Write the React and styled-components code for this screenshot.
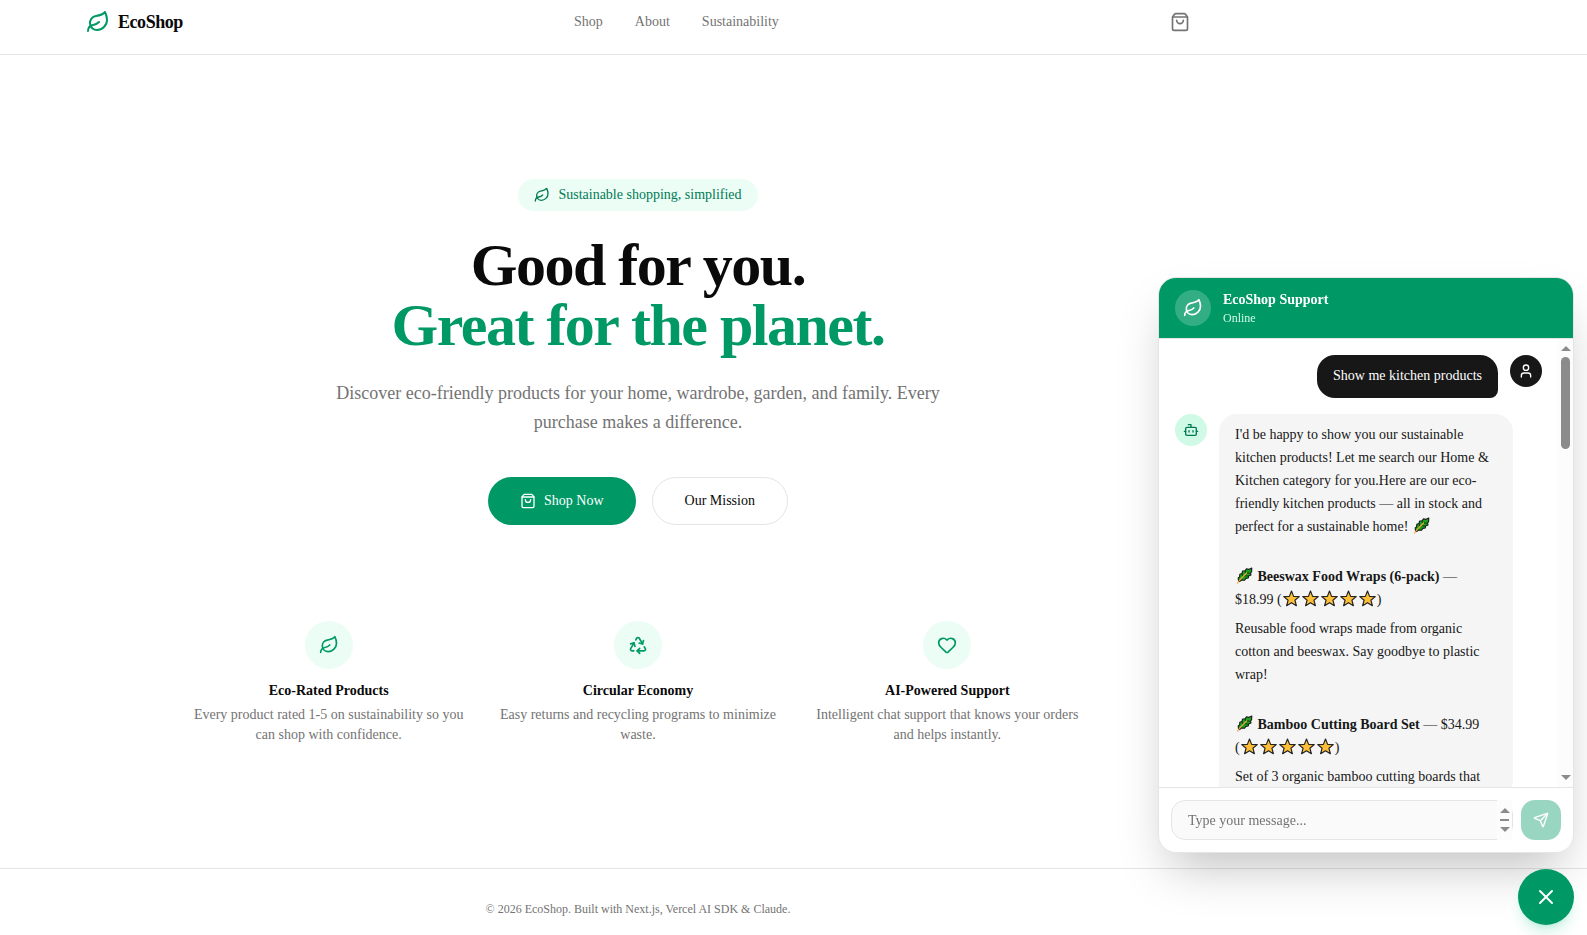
import React from "react";
import styled, { createGlobalStyle } from "styled-components";
import { Leaf, ShoppingBag, Recycle, Heart, User, Bot, Send, X } from "lucide-react";

const c = {
  green: "#009966",
  greenDark: "#007a55",
  green50: "#ecfdf5",
  green100: "#d0fae5",
  ink: "#0a0a0a",
  muted: "#737373",
  line: "#e5e5e5",
  dark: "#171717",
  soft: "#f5f5f5",
};

const Global = createGlobalStyle`
  *, *::before, *::after { box-sizing: border-box; }
  body, h1, h2, h3, p { margin: 0; }
  body {
    background: #fff;
    color: ${c.ink};
    font-family: "Liberation Serif", "Times New Roman", serif;
    font-size: 14px;
    line-height: 20px;
  }
  button, textarea { font: inherit; }
  button { cursor: pointer; border: 0; padding: 0; }
  a { color: inherit; text-decoration: none; }
  svg { display: block; flex-shrink: 0; }
`;

const Page = styled.div`
  min-height: 100vh;
  display: flex;
  flex-direction: column;
`;

const Header = styled.header`
  padding: 0 311px 10px 0;
  border-bottom: 1px solid ${c.line};
`;

const HeaderRow = styled.div`
  max-width: 1152px;
  height: 44px;
  margin: 0 auto;
  padding: 0 24px;
  display: flex;
  align-items: center;
  justify-content: space-between;
`;

const Logo = styled.a`
  display: flex;
  align-items: center;
  gap: 8px;
  font-size: 18px;
  line-height: 28px;
  font-weight: 700;
  letter-spacing: -0.025em;
  svg { color: ${c.green}; }
`;

const Nav = styled.nav`
  display: flex;
  gap: 32px;
  color: ${c.muted};
`;

const CartButton = styled.button`
  background: none;
  color: ${c.muted};
`;

const Main = styled.main`
  flex: 1;
  padding-right: 311px;
  display: flex;
  flex-direction: column;
  align-items: center;
  justify-content: center;
  text-align: center;
`;

const Badge = styled.div`
  display: flex;
  align-items: center;
  gap: 8px;
  padding: 6px 16px;
  border-radius: 16px;
  background: ${c.green50};
  color: ${c.greenDark};
`;

const Title = styled.h1`
  margin-top: 24px;
  font-size: 60px;
  line-height: 60px;
  font-weight: 700;
  letter-spacing: -0.025em;
  span { display: block; color: ${c.green}; }
`;

const Lead = styled.p`
  max-width: 640px;
  margin-top: 24px;
  font-size: 18px;
  line-height: 29px;
  color: ${c.muted};
`;

const Actions = styled.div`
  display: flex;
  gap: 16px;
  margin-top: 40px;
`;

const ActionButton = styled.button`
  display: flex;
  align-items: center;
  gap: 8px;
  height: 48px;
  padding: 0 32px;
  border-radius: 24px;
  border: ${(p) => (p.$primary ? "0" : `1px solid ${c.line}`)};
  background: ${(p) => (p.$primary ? c.green : "#fff")};
  color: ${(p) => (p.$primary ? "#fff" : c.ink)};
`;

const Features = styled.div`
  width: 100%;
  max-width: 896px;
  margin-top: 96px;
  display: grid;
  grid-template-columns: repeat(3, 1fr);
  gap: 32px;
`;

const Feature = styled.article`
  display: flex;
  flex-direction: column;
  align-items: center;
  h2 { margin-top: 12px; font-size: 14px; line-height: 20px; }
  p { margin-top: 4px; color: ${c.muted}; }
`;

const Round = styled.span`
  display: grid;
  place-items: center;
  flex-shrink: 0;
  width: ${(p) => p.$size}px;
  height: ${(p) => p.$size}px;
  border-radius: 50%;
  background: ${(p) => p.$bg};
  color: ${(p) => p.$fg};
`;

const Footer = styled.footer`
  padding: 32px 311px 18px 0;
  border-top: 1px solid ${c.line};
  text-align: center;
  font-size: 12px;
  line-height: 16px;
  color: ${c.muted};
`;

const Widget = styled.div`
  position: fixed;
  right: 13px;
  bottom: 10px;
  display: flex;
  flex-direction: column;
  align-items: flex-end;
  gap: 16px;
`;

const Panel = styled.section`
  width: 416px;
  height: 576px;
  max-width: calc(100vw - 26px);
  max-height: calc(100vh - 92px);
  display: flex;
  flex-direction: column;
  overflow: hidden;
  border: 1px solid ${c.line};
  border-radius: 18px;
  background: #fff;
  box-shadow: 0 25px 50px -12px rgba(0, 0, 0, 0.25);
`;

const PanelHeader = styled.header`
  display: flex;
  align-items: center;
  gap: 12px;
  padding: 12px 16px;
  border-bottom: 1px solid ${c.line};
  background: ${c.green};
  background-clip: padding-box;
  color: #fff;
  h2 { font-size: 14px; line-height: 20px; }
  p { font-size: 12px; line-height: 16px; color: ${c.green100}; }
`;

const Scroller = styled.div`
  flex: 1;
  min-height: 0;
  display: flex;
`;

const Messages = styled.div`
  flex: 1;
  overflow: hidden;
  padding: 16px;
  display: flex;
  flex-direction: column;
  gap: 16px;
`;

const Message = styled.div`
  display: flex;
  flex-shrink: 0;
  flex-direction: ${(p) => (p.$mine ? "row-reverse" : "row")};
  align-items: flex-start;
  gap: 12px;
`;

const Bubble = styled.div`
  max-width: 80%;
  padding: 9px 16px 11px;
  border-radius: 18px;
  border-bottom-${(p) => (p.$mine ? "right" : "left")}-radius: 8px;
  line-height: 23px;
  background: ${(p) => (p.$mine ? c.dark : c.soft)};
  color: ${(p) => (p.$mine ? "#fff" : c.dark)};
`;

const Product = styled.div`
  margin-top: 27px;
  p + p { margin-top: 6px; }
`;

const Emoji = styled.svg`
  && { display: inline-block; }
  width: 17px;
  height: 17px;
  margin: 0 1px;
  vertical-align: -3px;
`;

const Stars = styled.span`
  white-space: nowrap;
`;

const Track = styled.div`
  display: flex;
  flex-direction: column;
  align-items: center;
  flex-shrink: 0;
  width: 15px;
  padding: ${(p) => (p.$small ? "8px 0" : "7px 0")};
  margin: ${(p) => (p.$small ? "-1px 0" : "0")};
  background: #fcfcfc;
  justify-content: space-between;
`;

const Thumb = styled.span`
  width: 9px;
  height: 92px;
  margin: 6px 0 auto;
  border-radius: 5px;
  background: #8b8b8b;
`;

const Dash = styled.span`
  width: 9px;
  height: 2px;
  background: #8b8b8b;
`;

const Arrow = styled.span`
  border: solid transparent;
  border-width: 0 5px;
  border-${(p) => (p.$down ? "top" : "bottom")}: 5px solid #8b8b8b;
`;

const Composer = styled.form`
  display: flex;
  gap: 8px;
  padding: 12px;
  border-top: 1px solid ${c.line};
`;

const Field = styled.div`
  flex: 1;
  height: 40px;
  display: flex;
  border: 1px solid ${c.line};
  border-radius: 14px;
  background: #fafafa;
`;

const TextBox = styled.textarea`
  flex: 1;
  min-width: 0;
  padding: 10px 0 8px 16px;
  border: 0;
  outline: 0;
  resize: none;
  overflow: hidden;
  background: transparent;
  color: ${c.ink};
  &::placeholder { color: ${c.muted}; opacity: 1; }
`;

const SendButton = styled.button`
  display: grid;
  place-items: center;
  width: 40px;
  height: 40px;
  border-radius: 14px;
  background: ${c.green};
  color: #fff;
  opacity: 0.4;
`;

const CloseButton = styled.button`
  display: grid;
  place-items: center;
  width: 56px;
  height: 56px;
  border-radius: 50%;
  background: ${c.green};
  color: #fff;
  box-shadow: 0 10px 15px -3px rgba(0, 188, 125, 0.2), 0 4px 6px -4px rgba(0, 188, 125, 0.2);
`;

const Herb = () => (
  <Emoji viewBox="0 0 17 17" role="img" aria-label="herb">
    <path
      d="M2.5 13.8 2.2 11 3.6 9.8 3.8 7.2 6 6.4 6.6 4 9 3.8 10.500 1.8 12.500 2.4 15.8 1 15.6 4.6 14.6 6 15 8 12.6 9 12.3 11 9.8 11.4 8.6 13.2 5.6 13 3.6 14.6Z"
      fill="#17a31a"
      stroke="#1b1b1b"
      strokeWidth="1.1"
      strokeLinejoin="round"
    />
    <path
      d="M6.2 6.500 6.8 9.400M9.200 4 9.600 6.800M8.400 8.800 12.400 9M11 6 14.400 6.200"
      fill="none"
      stroke="#1b1b1b"
      strokeWidth="0.8"
    />
    <path d="M1.500 16 4.500 12.200 10.500 6" fill="none" stroke="#f0a63a" strokeWidth="1.2" strokeLinecap="round" />
  </Emoji>
);

const Star = () => (
  <Emoji viewBox="0 0 16 16" role="img" aria-label="star">
    <path
      d="M8 1 10 6 15.3 6.2 11.2 9.6 12.6 14.8 8 11.9 3.4 14.8 4.8 9.6.7 6.2 6 6Z"
      fill="#ffc038"
      stroke="#222"
      strokeWidth="1.1"
      strokeLinejoin="round"
    />
  </Emoji>
);

const Rating = () => (
  <Stars>
    (<Star /><Star /><Star /><Star /><Star />)
  </Stars>
);

const features = [
  { icon: Leaf, title: "Eco-Rated Products", text: "Every product rated 1-5 on sustainability so you can shop with confidence." },
  { icon: Recycle, title: "Circular Economy", text: "Easy returns and recycling programs to minimize waste." },
  { icon: Heart, title: "AI-Powered Support", text: "Intelligent chat support that knows your orders and helps instantly." },
];

const products = [
  { name: "Beeswax Food Wraps (6-pack)", price: "$18.99", text: "Reusable food wraps made from organic cotton and beeswax. Say goodbye to plastic wrap!" },
  { name: "Bamboo Cutting Board Set", price: "$34.99", text: "Set of 3 organic bamboo cutting boards that" },
];

export default function App() {
  return (
    <>
      <Global />
      <Page>
        <Header>
          <HeaderRow>
            <Logo href="#"><Leaf size={24} />EcoShop</Logo>
            <Nav>
              <a href="#shop">Shop</a>
              <a href="#about">About</a>
              <a href="#sustainability">Sustainability</a>
            </Nav>
            <CartButton type="button" aria-label="Cart"><ShoppingBag size={20} /></CartButton>
          </HeaderRow>
        </Header>

        <Main>
          <Badge><Leaf size={16} />Sustainable shopping, simplified</Badge>
          <Title>Good for you.<span>Great for the planet.</span></Title>
          <Lead>
            Discover eco-friendly products for your home, wardrobe, garden, and family. Every purchase makes a
            difference.
          </Lead>
          <Actions>
            <ActionButton type="button" $primary><ShoppingBag size={16} />Shop Now</ActionButton>
            <ActionButton type="button">Our Mission</ActionButton>
          </Actions>
          <Features>
            {features.map(({ icon: Icon, title, text }) => (
              <Feature key={title}>
                <Round $size={48} $bg={c.green50} $fg={c.green}><Icon size={20} /></Round>
                <h2>{title}</h2>
                <p>{text}</p>
              </Feature>
            ))}
          </Features>
        </Main>

        <Footer>© 2026 EcoShop. Built with Next.js, Vercel AI SDK &amp; Claude.</Footer>
      </Page>

      <Widget>
        <Panel aria-label="EcoShop Support">
          <PanelHeader>
            <Round $size={36} $bg="rgba(255, 255, 255, 0.2)" $fg="#fff"><Leaf size={20} /></Round>
            <div>
              <h2>EcoShop Support</h2>
              <p>Online</p>
            </div>
          </PanelHeader>
          <Scroller>
            <Messages>
              <Message $mine>
                <Round $size={32} $bg={c.dark} $fg="#fff"><User size={16} /></Round>
                <Bubble $mine>Show me kitchen products</Bubble>
              </Message>
              <Message>
                <Round $size={32} $bg={c.green100} $fg={c.greenDark}><Bot size={16} /></Round>
                <Bubble>
                  <p>
                    I'd be happy to show you our sustainable kitchen products! Let me search our Home &amp; Kitchen
                    category for you.Here are our eco-friendly kitchen products — all in stock and perfect for a
                    sustainable home! <Herb />
                  </p>
                  {products.map((p) => (
                    <Product key={p.name}>
                      <p><Herb /> <strong>{p.name}</strong> — {p.price} <Rating /></p>
                      <p>{p.text}</p>
                    </Product>
                  ))}
                </Bubble>
              </Message>
            </Messages>
            <Track aria-hidden="true"><Arrow /><Thumb /><Arrow $down /></Track>
          </Scroller>
          <Composer onSubmit={(e) => e.preventDefault()}>
            <Field>
              <TextBox rows={1} placeholder="Type your message..." aria-label="Message" />
              <Track $small aria-hidden="true"><Arrow /><Dash /><Arrow $down /></Track>
            </Field>
            <SendButton type="submit" aria-label="Send message"><Send size={16} /></SendButton>
          </Composer>
        </Panel>
        <CloseButton type="button" aria-label="Close chat"><X size={24} /></CloseButton>
      </Widget>
    </>
  );
}
